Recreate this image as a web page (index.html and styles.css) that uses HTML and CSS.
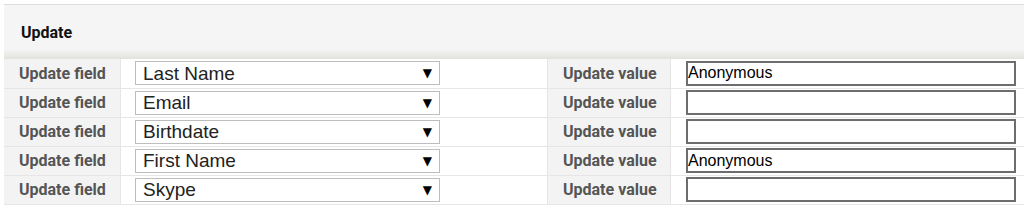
FILE: index.html
```html
<html>
<head>
  <title>Update</title>
  <link rel="stylesheet" href="styles.css">
</head>
<body>
  <div class="panel">
    <div class="panel-head">Update</div>
    <table class="update-table">
      <tr>
        <td class="label">Update field</td>
        <td class="field">
          <div class="select-wrap">
            <select><option>Last Name</option></select>
            <span class="arrow">&#9660;</span>
          </div>
        </td>
        <td class="label">Update value</td>
        <td class="value"><input type="text" value="Anonymous"></td>
      </tr>
      <tr>
        <td class="label">Update field</td>
        <td class="field">
          <div class="select-wrap">
            <select><option>Email</option></select>
            <span class="arrow">&#9660;</span>
          </div>
        </td>
        <td class="label">Update value</td>
        <td class="value"><input type="text" value=""></td>
      </tr>
      <tr>
        <td class="label">Update field</td>
        <td class="field">
          <div class="select-wrap">
            <select><option>Birthdate</option></select>
            <span class="arrow">&#9660;</span>
          </div>
        </td>
        <td class="label">Update value</td>
        <td class="value"><input type="text" value=""></td>
      </tr>
      <tr>
        <td class="label">Update field</td>
        <td class="field">
          <div class="select-wrap">
            <select><option>First Name</option></select>
            <span class="arrow">&#9660;</span>
          </div>
        </td>
        <td class="label">Update value</td>
        <td class="value"><input type="text" value="Anonymous"></td>
      </tr>
      <tr>
        <td class="label">Update field</td>
        <td class="field">
          <div class="select-wrap">
            <select><option>Skype</option></select>
            <span class="arrow">&#9660;</span>
          </div>
        </td>
        <td class="label">Update value</td>
        <td class="value"><input type="text" value=""></td>
      </tr>
    </table>
  </div>
</body>
</html>
```
FILE: styles.css
```css
body {
  margin: 0;
  background-color: #ffffff;
  font-family: Roboto, 'Liberation Sans', sans-serif;
}

.panel {
  margin: 4px 0 0 4px;
  border-top: 1px solid #dddddd;
}

.panel-head {
  display: flex;
  align-items: center;
  height: 54px;
  padding-left: 17px;
  background: linear-gradient(#f5f5f5 0, #f5f5f5 82%, #e2e2dc 100%);
  color: #111111;
  font-size: 16px;
  font-weight: bold;
}

.update-table {
  width: 1020px;
  border-collapse: collapse;
  table-layout: fixed;
}

.update-table td {
  height: 29px;
  padding: 0;
  border-bottom: 1px solid #e6e6e6;
  vertical-align: middle;
}

.update-table td.label {
  padding-left: 15px;
  background-color: #f3f3f3;
  color: #555555;
  font-size: 16px;
  font-weight: bold;
  border-right: 1px solid #e6e6e6;
}

.update-table td.label:first-child {
  width: 101px;
}

.update-table td.label:nth-child(3) {
  width: 107px;
  border-left: 1px solid #e6e6e6;
}

.update-table td.field {
  width: 412px;
  padding-left: 14px;
}

.update-table td.value {
  padding-left: 15px;
}

.select-wrap {
  position: relative;
  width: 305px;
  height: 24px;
}

.select-wrap select {
  appearance: none;
  -webkit-appearance: none;
  width: 100%;
  height: 24px;
  box-sizing: border-box;
  margin: 0;
  padding: 0 0 0 7px;
  border: 1px solid #bdbdbd;
  border-radius: 0;
  background-color: #ffffff;
  color: #222222;
  font-family: 'Liberation Sans', Arial, sans-serif;
  font-size: 19px;
}

.arrow {
  position: absolute;
  right: 8px;
  top: 5px;
  color: #000000;
  font-family: 'DejaVu Sans', sans-serif;
  font-size: 12px;
  line-height: 14px;
  pointer-events: none;
}

.value input {
  width: 330px;
  height: 25px;
  box-sizing: border-box;
  margin: 0;
  padding: 0;
  border: 2px solid #6d6d6d;
  border-radius: 0;
  background-color: #ffffff;
  color: #000000;
  font-family: 'Liberation Sans', Arial, sans-serif;
  font-size: 16px;
}
```
